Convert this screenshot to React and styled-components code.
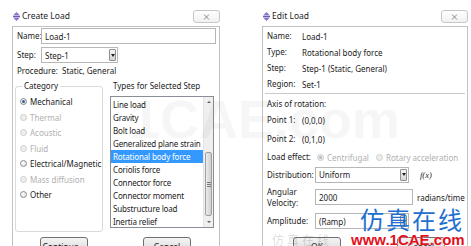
import React from 'react';
import styled, { createGlobalStyle } from 'styled-components';

const GlobalStyle = createGlobalStyle`
  html, body {
    margin: 0;
    padding: 0;
    background: #ffffff;
  }
  body {
    font-family: 'Noto Sans', 'Segoe UI', sans-serif;
    font-size: 8px;
    color: #1b1b1b;
  }
`;

const Page = styled.div`
  position: relative;
  display: flex;
  gap: 42px;
  width: 471px;
  height: 246px;
  padding-left: 12px;
  box-sizing: border-box;
  overflow: hidden;
`;

const Window = styled.div`
  display: flex;
  flex-direction: column;
  flex: none;
  width: ${(p) => p.$width}px;
`;

const TitleBar = styled.div`
  display: flex;
  align-items: flex-start;
  flex: none;
  height: 26px;
`;

const TitleIconSvg = styled.svg`
  flex: none;
  width: 7px;
  height: 9px;
  margin: 12px 0 0 1px;
`;

const TitleText = styled.span`
  margin: 10px 0 0 2px;
  font-size: 8.5px;
  line-height: 12px;
  color: #1e1e1e;
`;

const CloseButton = styled.div`
  display: flex;
  align-items: center;
  justify-content: center;
  width: 27px;
  height: 13px;
  margin: 10px 0 0 auto;
  box-sizing: border-box;
  border: 1px solid #c6c6c6;
  border-radius: 3px;
  background: linear-gradient(#ffffff, #f1f1f1);
`;

const Client = styled.div`
  flex: 1;
  display: flex;
  flex-direction: column;
  box-sizing: border-box;
  border: 1px solid #c2c2c2;
  border-bottom: none;
  padding: ${(p) => p.$pad};
  background: #ffffff;
`;

const Row = styled.div`
  display: flex;
  align-items: center;
  height: ${(p) => p.$h || 16}px;
  margin-top: ${(p) => p.$mt || 0}px;
  flex: none;
`;

const Label = styled.span`
  flex: none;
  width: ${(p) => p.$w}px;
  line-height: ${(p) => p.$lh || 16}px;
  color: ${(p) => (p.$disabled ? '#a9a9a9' : '#1b1b1b')};
  white-space: ${(p) => (p.$wrap ? 'normal' : 'nowrap')};
`;

const Value = styled.span`
  white-space: nowrap;
`;

const TextInput = styled.div`
  display: flex;
  align-items: center;
  box-sizing: border-box;
  height: 16px;
  width: ${(p) => (p.$w ? `${p.$w}px` : 'auto')};
  flex: ${(p) => (p.$w ? 'none' : '1')};
  margin-right: ${(p) => p.$mr || 0}px;
  padding-left: 3px;
  border: 1px solid #b7b7b7;
  background: #ffffff;
  white-space: nowrap;
`;

const Combo = styled(TextInput)`
  padding-right: 1px;
  justify-content: space-between;
`;

const ComboArrow = styled.span`
  display: flex;
  align-items: center;
  justify-content: center;
  width: 7px;
  height: 12px;
  box-sizing: border-box;
  border: 1px solid #8f8f8f;
  border-radius: 1px;
  background: linear-gradient(#f6f6f6, #d6d6d6);

  &::after {
    content: '';
    border-left: 2px solid transparent;
    border-right: 2px solid transparent;
    border-top: 3px solid #202020;
  }
`;

const Procedure = styled.div`
  margin-top: 1px;
  line-height: 14px;
  white-space: nowrap;
`;

const Content = styled.div`
  display: flex;
  gap: 7px;
  margin-top: 2px;
`;

const Group = styled.fieldset`
  box-sizing: border-box;
  width: 88px;
  height: 152px;
  margin: 0 0 0 -2px;
  padding: 2px 0 0 4px;
  border: 1px solid #dadada;
  border-radius: 3px;
  min-width: 0;
`;

const Legend = styled.legend`
  margin-left: 2px;
  padding: 0 2px;
  line-height: 12px;
  font-size: 8px;
`;

const RadioRow = styled.div`
  display: flex;
  align-items: center;
  gap: 3px;
  height: 15.5px;
  white-space: nowrap;
  color: ${(p) => (p.$disabled ? '#b0b0b0' : '#1b1b1b')};
  margin-left: ${(p) => p.$ml || 0}px;
`;

const RadioDot = styled.span`
  flex: none;
  position: relative;
  width: 7px;
  height: 7px;
  box-sizing: border-box;
  border-radius: 50%;
  border: 1px solid ${(p) => (p.$disabled ? '#cdcdcd' : '#8c8c8c')};
  background: ${(p) =>
    p.$disabled ? '#eeeeee' : 'radial-gradient(circle at 40% 40%, #ffffff, #d8d8d8)'};

  &::after {
    content: '';
    display: ${(p) => (p.$checked ? 'block' : 'none')};
    position: absolute;
    inset: 1px;
    border-radius: 50%;
    background: ${(p) => (p.$disabled ? '#b9b9b9' : '#35609a')};
  }
`;

const TypesColumn = styled.div`
  display: flex;
  flex-direction: column;
`;

const TypesLabel = styled.div`
  margin-left: 3px;
  line-height: 12px;
  white-space: nowrap;
`;

const ListBox = styled.div`
  display: flex;
  width: 104px;
  height: 132px;
  margin-top: 4px;
  box-sizing: border-box;
  border: 1px solid #8a8e96;
  background: #ffffff;
`;

const ListItems = styled.div`
  flex: 1;
  min-width: 0;
  padding-top: 1px;
`;

const ListItem = styled.div`
  height: 13px;
  line-height: 13px;
  padding-left: 2px;
  letter-spacing: -0.15px;
  white-space: nowrap;
  overflow: hidden;
  color: ${(p) => (p.$selected ? '#ffffff' : '#1b1b1b')};
  background: ${(p) => (p.$selected ? '#3399ff' : 'transparent')};
`;

const ScrollBar = styled.div`
  display: flex;
  flex-direction: column;
  width: 9px;
  flex: none;
  background: #efefef;
  border-left: 1px solid #e4e4e4;
`;

const ScrollArrow = styled.div`
  display: flex;
  align-items: center;
  justify-content: center;
  height: 10px;
  flex: none;

  &::after {
    content: '';
    border-left: 2px solid transparent;
    border-right: 2px solid transparent;
    ${(p) => (p.$up ? 'border-bottom: 2px solid #606060;' : 'border-top: 2px solid #606060;')}
  }
`;

const ScrollSpace = styled.div`
  flex: ${(p) => (p.$h ? 'none' : '1')};
  height: ${(p) => (p.$h ? `${p.$h}px` : 'auto')};
`;

const Thumb = styled.div`
  display: flex;
  align-items: center;
  justify-content: center;
  flex: none;
  height: 64px;
  margin: 0 1px;
  box-sizing: border-box;
  border: 1px solid #a0a0a0;
  border-radius: 2px;
  background: linear-gradient(90deg, #ececec, #cfcfcf);

  &::after {
    content: '';
    width: 4px;
    height: 5px;
    background: repeating-linear-gradient(#7a7a7a 0 1px, transparent 1px 2px);
  }
`;

const ButtonRow = styled.div`
  display: flex;
  gap: ${(p) => p.$gap}px;
  padding-left: ${(p) => p.$pl}px;
  margin-top: ${(p) => p.$mt}px;
`;

const Button = styled.div`
  display: flex;
  justify-content: center;
  width: 48px;
  height: 21px;
  box-sizing: border-box;
  padding-top: 3px;
  border: 1px solid #707070;
  border-radius: 3px;
  background: linear-gradient(#f4f4f4, #e3e3e3 50%, #d8d8d8);
  font-size: 8.5px;
  color: #1b1b1b;
`;

const Separator = styled.div`
  height: 1px;
  margin: 1px 0 0 -2px;
  background: #c9c9c9;
`;

const Fx = styled.span`
  margin-left: 11px;
  font-family: 'Liberation Serif', serif;
  font-style: italic;
  font-size: 8.5px;
`;

const Unit = styled.span`
  margin-left: 4px;
  white-space: nowrap;
`;

const Watermark = styled.div`
  position: absolute;
  left: ${(p) => p.$x}px;
  top: ${(p) => p.$y}px;
  white-space: nowrap;
  pointer-events: none;
`;

const BigMark = styled(Watermark)`
  font-family: 'Liberation Sans', sans-serif;
  font-weight: 700;
  font-size: 54px;
  line-height: 1;
  color: rgba(0, 0, 0, 0.035);
`;

const ChineseMark = styled(Watermark)`
  font-family: 'Noto Sans CJK SC', sans-serif;
  font-size: ${(p) => p.$size}px;
  line-height: 1;
  letter-spacing: ${(p) => p.$ls}px;
  color: ${(p) => p.$color};
`;

const SiteMark = styled(Watermark)`
  font-family: 'Liberation Sans', sans-serif;
  font-weight: 700;
  font-size: 15px;
  line-height: 1;
  color: #e3101c;
  text-shadow: 0 0 1px #ffffff;
`;

const LoadIcon = () => (
  <TitleIconSvg viewBox="0 0 7 9">
    <polygon points="3.5,0 7,3.4 0,3.4" fill="#8b73c9" />
    <rect x="0" y="4" width="7" height="1" fill="#6a5aa8" />
    <polygon points="0,5.6 7,5.6 3.5,9" fill="#8b73c9" />
  </TitleIconSvg>
);

const CloseIcon = () => (
  <svg width="7" height="6" viewBox="0 0 7 6">
    <path d="M1 0.5 L6 5.5 M6 0.5 L1 5.5" stroke="#8a8a8a" strokeWidth="1" fill="none" />
  </svg>
);

const categories = [
  { name: 'Mechanical', checked: true },
  { name: 'Thermal', disabled: true },
  { name: 'Acoustic', disabled: true },
  { name: 'Fluid', disabled: true },
  { name: 'Electrical/Magnetic' },
  { name: 'Mass diffusion', disabled: true },
  { name: 'Other' },
];

const loadTypes = [
  'Line load',
  'Gravity',
  'Bolt load',
  'Generalized plane strain',
  'Rotational body force',
  'Coriolis force',
  'Connector force',
  'Connector moment',
  'Substructure load',
  'Inertia relief',
];

const CreateLoad = () => (
  <Window $width={208}>
    <TitleBar>
      <LoadIcon />
      <TitleText>Create Load</TitleText>
      <CloseButton>
        <CloseIcon />
      </CloseButton>
    </TitleBar>
    <Client $pad="1px 3px 0 4px">
      <Row>
        <Label $w={24}>Name:</Label>
        <TextInput>Load-1</TextInput>
      </Row>
      <Row $mt={3}>
        <Label $w={24}>Step:</Label>
        <Combo $w={77}>
          Step-1
          <ComboArrow />
        </Combo>
      </Row>
      <Procedure>Procedure:&nbsp; Static, General</Procedure>
      <Content>
        <Group>
          <Legend>Category</Legend>
          {categories.map((c) => (
            <RadioRow key={c.name} $disabled={c.disabled}>
              <RadioDot $checked={c.checked} $disabled={c.disabled} />
              {c.name}
            </RadioRow>
          ))}
        </Group>
        <TypesColumn>
          <TypesLabel>Types for Selected Step</TypesLabel>
          <ListBox>
            <ListItems>
              {loadTypes.map((t) => (
                <ListItem key={t} $selected={t === 'Rotational body force'}>
                  {t}
                </ListItem>
              ))}
            </ListItems>
            <ScrollBar>
              <ScrollArrow $up />
              <ScrollSpace $h={45} />
              <Thumb />
              <ScrollSpace />
              <ScrollArrow />
            </ScrollBar>
          </ListBox>
        </TypesColumn>
      </Content>
      <ButtonRow $pl={23} $gap={55} $mt={5}>
        <Button>Continue...</Button>
        <Button>Cancel</Button>
      </ButtonRow>
    </Client>
  </Window>
);

const EditLoad = () => (
  <Window $width={206}>
    <TitleBar>
      <LoadIcon />
      <TitleText>Edit Load</TitleText>
      <CloseButton>
        <CloseIcon />
      </CloseButton>
    </TitleBar>
    <Client $pad="1px 2px 0 4px">
      <Row>
        <Label $w={35}>Name:</Label>
        <Value>Load-1</Value>
      </Row>
      <Row>
        <Label $w={35}>Type:</Label>
        <Value>Rotational body force</Value>
      </Row>
      <Row>
        <Label $w={35}>Step:</Label>
        <Value>Step-1 (Static, General)</Value>
      </Row>
      <Row>
        <Label $w={35}>Region:</Label>
        <Value>Set-1</Value>
      </Row>
      <Separator />
      <Row $mt={2}>
        <Label $w={80}>Axis of rotation:</Label>
      </Row>
      <Row>
        <Label $w={35}>Point 1:</Label>
        <Value>(0,0,0)</Value>
      </Row>
      <Row $mt={3}>
        <Label $w={35}>Point 2:</Label>
        <Value>(0,1,0)</Value>
      </Row>
      <Row $mt={2}>
        <Label $w={48}>Load effect:</Label>
        <RadioRow $disabled $ml={2}>
          <RadioDot $checked $disabled />
          Centrifugal
        </RadioRow>
        <RadioRow $disabled $ml={7}>
          <RadioDot $disabled />
          Rotary acceleration
        </RadioRow>
      </Row>
      <Row $mt={1} $h={17}>
        <Label $w={48}>Distribution:</Label>
        <Combo $w={94}>
          Uniform
          <ComboArrow />
        </Combo>
        <Fx>f(x)</Fx>
      </Row>
      <Row $mt={3} $h={22}>
        <Label $w={48} $lh={11} $wrap>
          Angular Velocity:
        </Label>
        <TextInput $w={98}>2000</TextInput>
        <Unit>radians/time</Unit>
      </Row>
      <Row $mt={5}>
        <Label $w={48}>Amplitude:</Label>
        <Combo $w={94}>
          (Ramp)
          <ComboArrow />
        </Combo>
      </Row>
      <ButtonRow $pl={26} $gap={56} $mt={8}>
        <Button>OK</Button>
        <Button>Cancel</Button>
      </ButtonRow>
    </Client>
  </Window>
);

export default function App() {
  return (
    <>
      <GlobalStyle />
      <Page>
        <CreateLoad />
        <EditLoad />
        <BigMark $x={130} $y={92}>
          1CAE.com
        </BigMark>
        <ChineseMark $x={272} $y={234} $size={12} $ls={3} $color="rgba(0,0,0,0.16)">
          仿真在线
        </ChineseMark>
        <ChineseMark $x={360} $y={207} $size={24} $ls={2} $color="#1f6fd0">
          仿真在线
        </ChineseMark>
        <SiteMark $x={351} $y={232}>
          www.1CAE.com
        </SiteMark>
      </Page>
    </>
  );
}
